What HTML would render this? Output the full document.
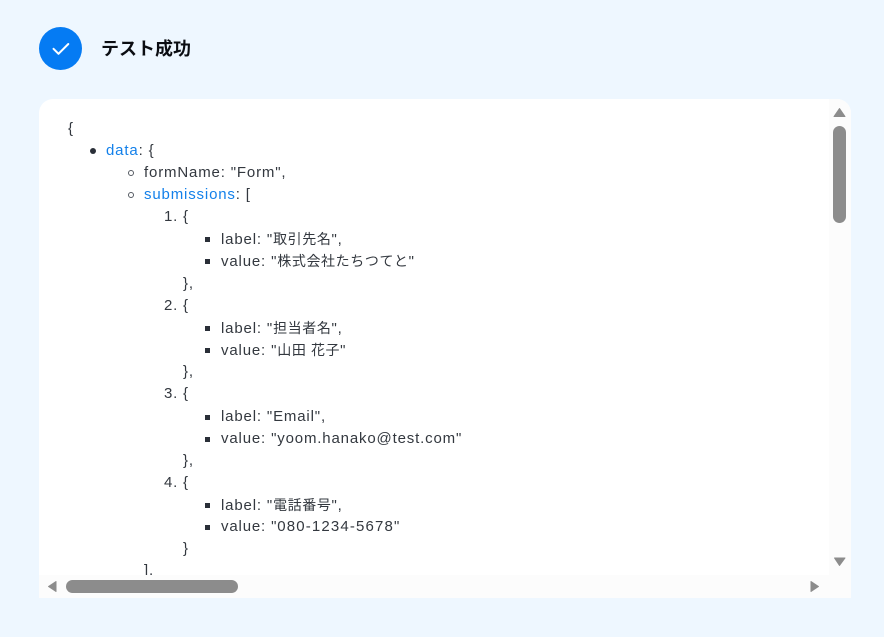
<!DOCTYPE html>
<html lang="ja"><head><meta charset="utf-8">
<style>
html,body{margin:0;padding:0;width:884px;height:637px;overflow:hidden;background:#eef7ff;}
body{position:relative;font-family:"Liberation Sans","Noto Sans CJK JP",sans-serif;}
.abs{position:absolute}
.panel{position:absolute;left:39px;top:99px;width:812px;height:499px;background:#fff;border-radius:14px 14px 0 0;overflow:hidden}
.l{position:absolute;white-space:pre;font-size:15px;line-height:22px;height:22px;margin-top:1px;color:#33383f;letter-spacing:.84px}
.l b{font-weight:normal;color:#1380ea}
.l i{font-style:normal;font-size:14px;letter-spacing:.6px}
.l u{text-decoration:none;letter-spacing:1.15px}
.d{position:absolute;box-sizing:border-box}
.disc{width:6px;height:6px;border-radius:50%;background:#2a2f38}
.circ{width:6px;height:6px;border-radius:50%;border:1px solid #555a62}
.sq{width:5px;height:5px;background:#2a2f38}
</style></head><body>
<div class="abs" style="left:39px;top:27px;width:43px;height:43px;border-radius:50%;background:#057bf3"></div>
<svg class="abs" style="left:39px;top:27px" width="43" height="43" viewBox="0 0 43 43"><path d="M14.5 21.8l5 5L29.3 17" fill="none" stroke="#fff" stroke-width="2" stroke-linecap="round" stroke-linejoin="round"/></svg>
<div class="abs" style="left:101px;top:37px;font-size:18px;line-height:24px;font-weight:700;color:#0b0d12;white-space:pre">テスト成功</div>

<div class="panel">
<div class="l" style="left:29px;top:18px">{</div>
<div class="d disc" style="left:51px;top:49px"></div>
<div class="l" style="left:67px;top:40px"><b>data</b>: {</div>
<div class="d circ" style="left:89px;top:71px"></div>
<div class="l" style="left:105px;top:62px">formName: "Form",</div>
<div class="d circ" style="left:89px;top:93px"></div>
<div class="l" style="left:105px;top:84px"><b>submissions</b>: [</div>

<div class="l" style="left:125px;top:106px">1.</div><div class="l" style="left:144px;top:106px">{</div>
<div class="d sq" style="left:166px;top:138px"></div>
<div class="l" style="left:182px;top:128px">label: "<i>取引先名</i>",</div>
<div class="d sq" style="left:166px;top:160px"></div>
<div class="l" style="left:182px;top:150px">value: "<i>株式会社たちつてと</i>"</div>
<div class="l" style="left:144px;top:173px">},</div>

<div class="l" style="left:125px;top:195px">2.</div><div class="l" style="left:144px;top:195px">{</div>
<div class="d sq" style="left:166px;top:227px"></div>
<div class="l" style="left:182px;top:217px">label: "<i>担当者名</i>",</div>
<div class="d sq" style="left:166px;top:249px"></div>
<div class="l" style="left:182px;top:239px">value: "<i>山田 花子</i>"</div>
<div class="l" style="left:144px;top:261px">},</div>

<div class="l" style="left:125px;top:283px">3.</div><div class="l" style="left:144px;top:283px">{</div>
<div class="d sq" style="left:166px;top:316px"></div>
<div class="l" style="left:182px;top:306px">label: "Email",</div>
<div class="d sq" style="left:166px;top:338px"></div>
<div class="l" style="left:182px;top:328px">value: "yoom.hanako@test.com"</div>
<div class="l" style="left:144px;top:350px">},</div>

<div class="l" style="left:125px;top:372px">4.</div><div class="l" style="left:144px;top:372px">{</div>
<div class="d sq" style="left:166px;top:404px"></div>
<div class="l" style="left:182px;top:394px">label: "<i>電話番号</i>",</div>
<div class="d sq" style="left:166px;top:426px"></div>
<div class="l" style="left:182px;top:416px">value: "<u>080-1234-5678</u>"</div>
<div class="l" style="left:144px;top:438px">}</div>
<div class="l" style="left:105px;top:460px">],</div>

<div class="d" style="left:790px;top:0;width:22px;height:499px;background:#fcfcfc"></div>
<div class="d" style="left:0;top:476px;width:812px;height:23px;background:#fcfcfc"></div>
<div class="d" style="left:794px;top:27px;width:13px;height:97px;border-radius:7px;background:#8c8c8c"></div>
<div class="d" style="left:27px;top:481px;width:172px;height:13px;border-radius:7px;background:#8c8c8c"></div>
</div>
<svg class="abs" style="left:0;top:0" width="884" height="637" viewBox="0 0 884 637">
<path d="M839.5 108.5L845 116.5H834z" fill="#8c8c8c" stroke="#8c8c8c" stroke-linejoin="round"/>
<path d="M834.5 558H845L839.5 565.5z" fill="#8c8c8c" stroke="#8c8c8c" stroke-linejoin="round"/>
<path d="M48.5 586.5L56 581.5V591.5z" fill="#8c8c8c" stroke="#8c8c8c" stroke-linejoin="round"/>
<path d="M811 581.5L818.5 586.5L811 591.5z" fill="#8c8c8c" stroke="#8c8c8c" stroke-linejoin="round"/>
</svg>
</body></html>
